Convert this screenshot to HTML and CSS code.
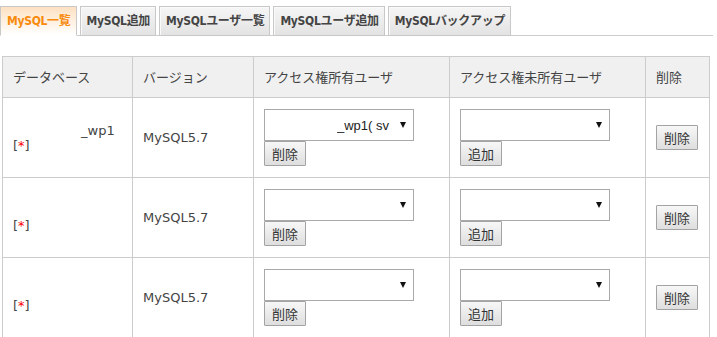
FILE: index.html
```html
<!DOCTYPE html>
<html lang="ja">
<head>
    <meta charset="UTF-8">
    <title>MySQL一覧</title>
    <link rel="stylesheet" href="styles.css">
</head>
<body>
    <!-- Tabs -->
    <ul class="tabs">
        <li class="tab active">MySQL一覧</li>
        <li class="tab">MySQL追加</li>
        <li class="tab">MySQLユーザ一覧</li>
        <li class="tab">MySQLユーザ追加</li>
        <li class="tab">MySQLバックアップ</li>
    </ul>

    <!-- Database list -->
    <table class="db-table">
        <colgroup>
            <col class="col-name">
            <col class="col-version">
            <col class="col-users">
            <col class="col-users">
            <col class="col-delete">
        </colgroup>
        <thead>
            <tr>
                <th>データベース</th>
                <th>バージョン</th>
                <th>アクセス権所有ユーザ</th>
                <th>アクセス権未所有ユーザ</th>
                <th>削除</th>
            </tr>
        </thead>
        <tbody>
            <tr>
                <td class="db-name"><span class="mask"></span>_wp1<br>[<span class="star">*</span>]</td>
                <td>MySQL5.7</td>
                <td>
                    <div class="user-box">
                        <span class="select-wrap"><select class="user-select masked"><option>_wp1( sv</option></select></span>
                        <button class="btn">削除</button>
                    </div>
                </td>
                <td>
                    <div class="user-box">
                        <span class="select-wrap"><select class="user-select"><option></option></select></span>
                        <button class="btn">追加</button>
                    </div>
                </td>
                <td><button class="btn">削除</button></td>
            </tr>
            <tr>
                <td class="db-name">&nbsp;<br>[<span class="star">*</span>]</td>
                <td>MySQL5.7</td>
                <td>
                    <div class="user-box">
                        <span class="select-wrap"><select class="user-select"><option></option></select></span>
                        <button class="btn">削除</button>
                    </div>
                </td>
                <td>
                    <div class="user-box">
                        <span class="select-wrap"><select class="user-select"><option></option></select></span>
                        <button class="btn">追加</button>
                    </div>
                </td>
                <td><button class="btn">削除</button></td>
            </tr>
            <tr>
                <td class="db-name">&nbsp;<br>[<span class="star">*</span>]</td>
                <td>MySQL5.7</td>
                <td>
                    <div class="user-box">
                        <span class="select-wrap"><select class="user-select"><option></option></select></span>
                        <button class="btn">削除</button>
                    </div>
                </td>
                <td>
                    <div class="user-box">
                        <span class="select-wrap"><select class="user-select"><option></option></select></span>
                        <button class="btn">追加</button>
                    </div>
                </td>
                <td><button class="btn">削除</button></td>
            </tr>
        </tbody>
    </table>
</body>
</html>
```

FILE: styles.css
```css
body {
    margin: 0;
    font-family: "DejaVu Sans", "Noto Sans CJK JP", sans-serif;
    font-size: 13px;
    color: #444;
    background: #fff;
}

/* Tabs */
.tabs {
    display: flex;
    gap: 3px;
    list-style: none;
    margin: 6px 4px 0 0;
    padding: 0;
    height: 29px;
    border-bottom: 1px solid #ccc;
}

.tab {
    box-sizing: border-box;
    height: 30px;
    line-height: 28px;
    padding: 0 5px 0 6px;
    border: 1px solid #c8c8c8;
    background: linear-gradient(#f6f6f6, #e3e3e3);
    box-shadow: inset 1px 1px 0 #fafafa;
    font-size: 12px;
    font-weight: bold;
    font-stretch: condensed;
    letter-spacing: -0.3px;
    color: #444;
    white-space: nowrap;
}

.tab.active {
    border-bottom-color: #fff;
    background: linear-gradient(#fde1c2, #fff);
    box-shadow: none;
    color: #f88a0c;
}

/* Table */
.db-table {
    margin: 20px 0 0 2px;
    width: 707px;
    table-layout: fixed;
    border-collapse: collapse;
}

.col-name { width: 130px; }
.col-version { width: 121px; }
.col-users { width: 196px; }
.col-delete { width: 64px; }

.db-table th,
.db-table td {
    border: 1px solid #ccc;
    padding: 11px 10px;
    text-align: left;
    vertical-align: middle;
    line-height: 15px;
    white-space: nowrap;
    overflow: hidden;
}

.db-table th {
    padding: 13px 10px 12px;
    background: #f0f0f0;
    font-weight: normal;
    color: #444;
}

.db-table td {
    height: 57px;
}

.mask {
    display: inline-block;
    width: 68px;
}

.star {
    color: #f00;
}

.user-box {
    display: flex;
    flex-direction: column;
    align-items: flex-start;
}

.select-wrap {
    position: relative;
    display: block;
}

.select-wrap::after {
    content: "";
    position: absolute;
    top: 13px;
    right: 8px;
    border-left: 3px solid transparent;
    border-right: 3px solid transparent;
    border-top: 6px solid #111;
    pointer-events: none;
}

.user-select {
    -webkit-appearance: none;
    appearance: none;
    box-sizing: border-box;
    width: 150px;
    height: 32px;
    margin: 0;
    padding: 0 20px 0 4px;
    border: 1px solid #a9a9a9;
    background: #fff;
    font-family: "Liberation Sans", "Noto Sans CJK JP", sans-serif;
    font-size: 13px;
    color: #222;
}

.user-select.masked {
    padding-left: 72px;
}

.btn {
    box-sizing: border-box;
    height: 25px;
    margin: 0;
    padding: 0 7px;
    border: 1px solid #a3a3a3;
    border-radius: 1px;
    background: linear-gradient(#f7f7f7, #dedede);
    font-family: "DejaVu Sans", "Noto Sans CJK JP", sans-serif;
    font-size: 13px;
    color: #333;
    cursor: pointer;
}
```
